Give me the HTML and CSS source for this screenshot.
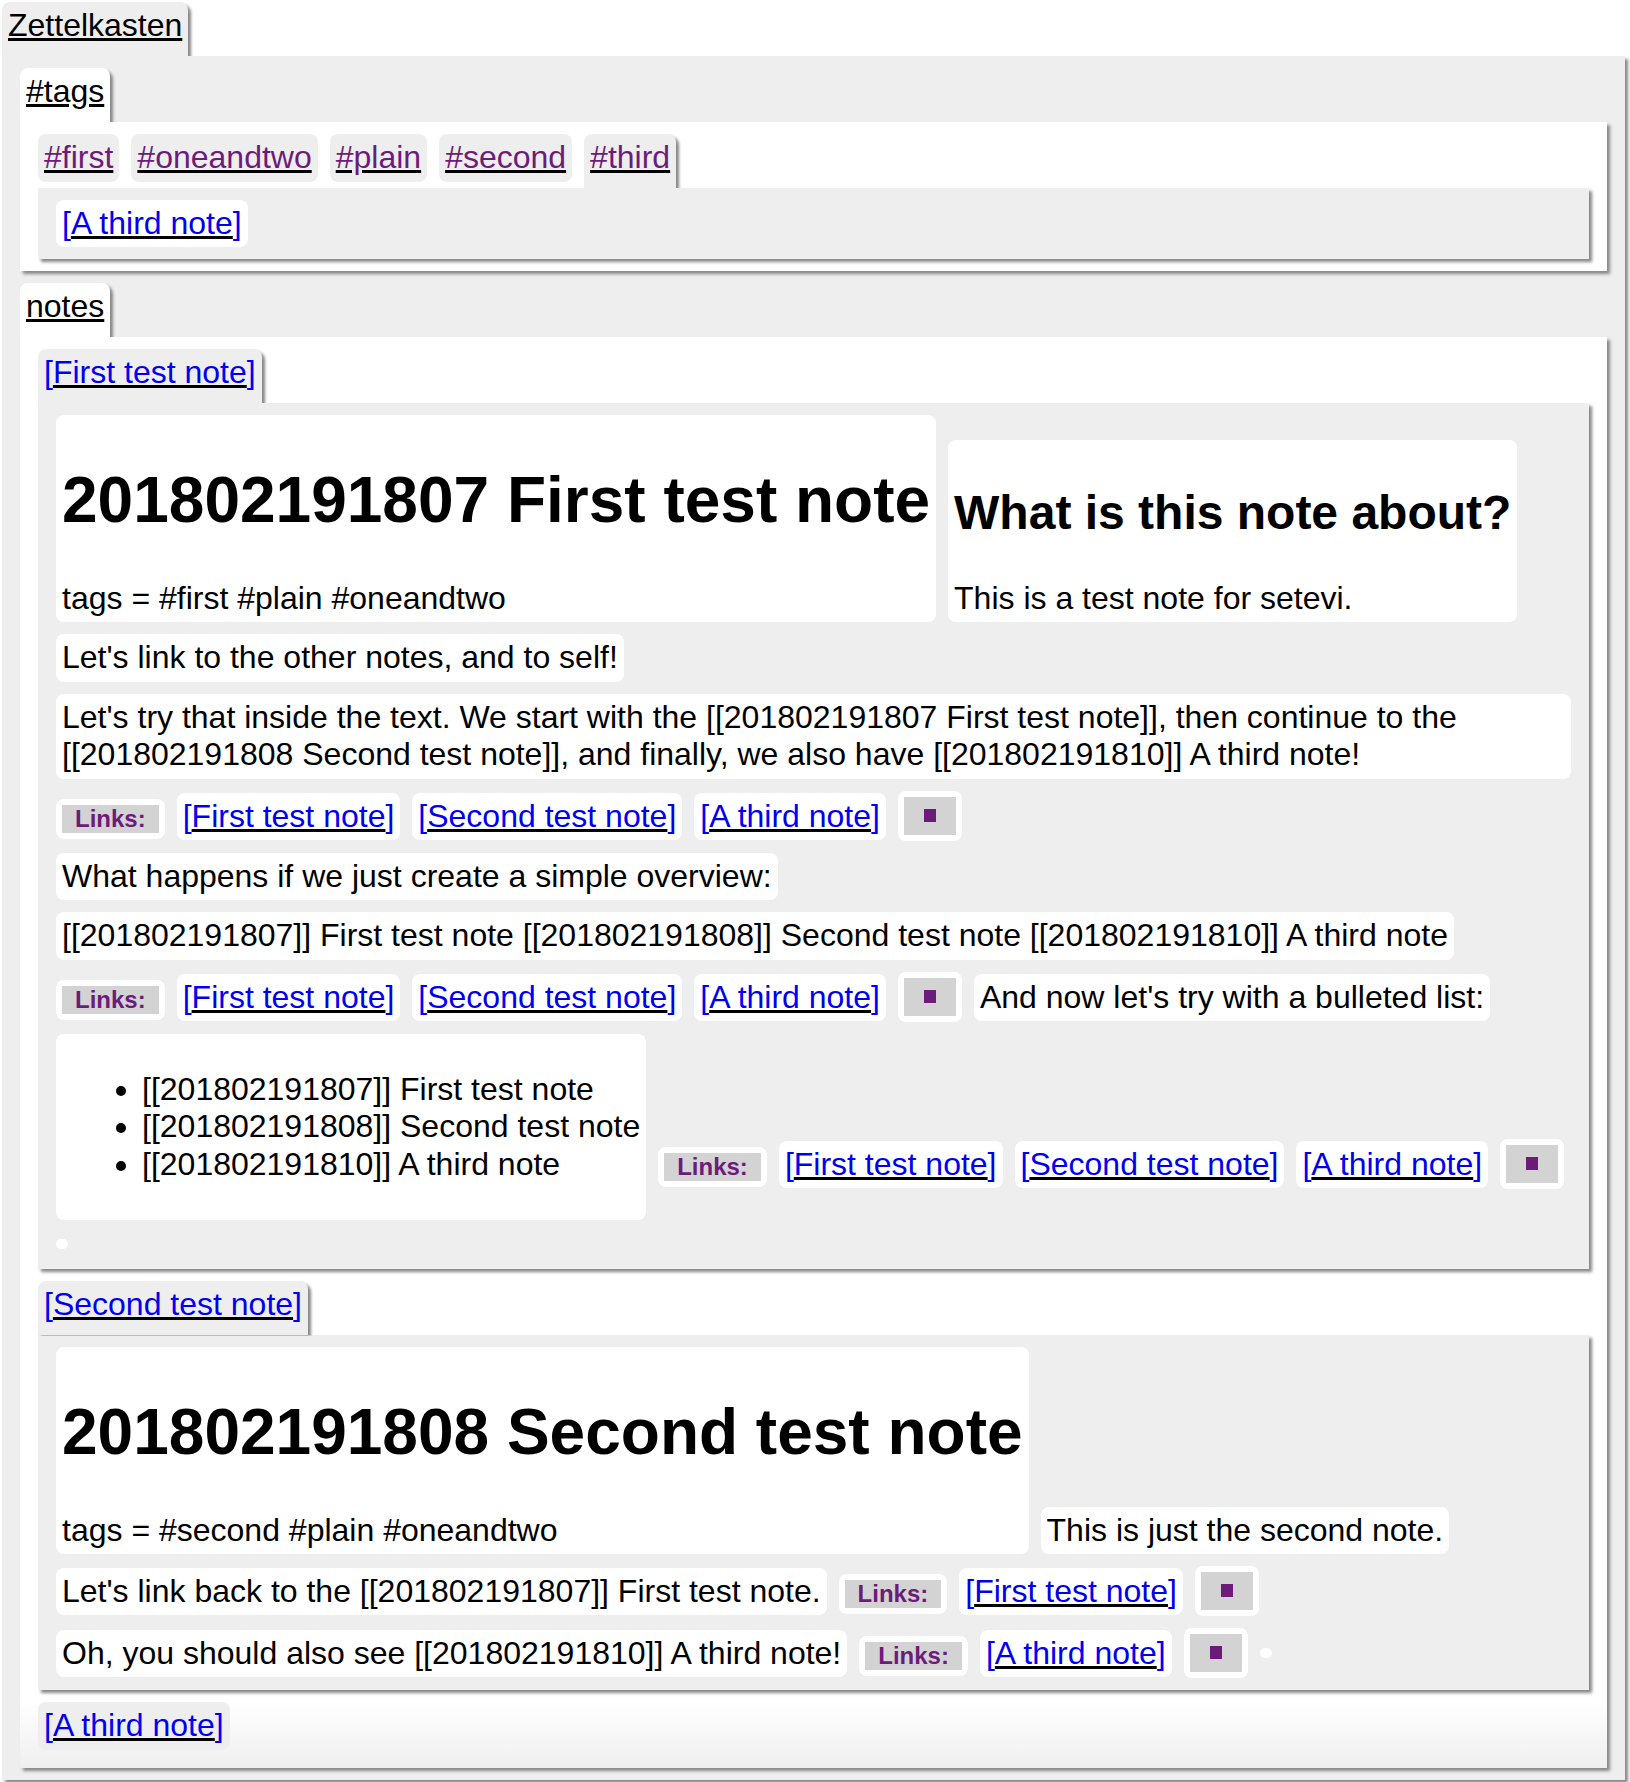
FILE: index.html
```html
<!DOCTYPE html>
<html>
<head>
<meta charset="utf-8">
<title>Zettelkasten</title>
<link rel="stylesheet" href="styles.css">
</head>
<body>
<div class="group root">
  <div class="tabbar"><span class="tab on grey"><a href="#">Zettelkasten</a></span></div>
  <div class="panel grey stack">
    <div class="group">
      <div class="tabbar"><span class="tab on white"><a href="#">#tags</a></span></div>
      <div class="panel white stack">
        <div class="group">
          <div class="tabbar">
            <span class="tab grey tag"><a href="#">#first</a></span>
            <span class="tab grey tag"><a href="#">#oneandtwo</a></span>
            <span class="tab grey tag"><a href="#">#plain</a></span>
            <span class="tab grey tag"><a href="#">#second</a></span>
            <span class="tab on grey tag"><a href="#">#third</a></span>
          </div>
          <div class="panel grey flow"><span class="it ref">[<a href="#">A third note</a>]</span></div>
        </div>
      </div>
    </div>
    <div class="group">
      <div class="tabbar"><span class="tab on white"><a href="#">notes</a></span></div>
      <div class="panel white stack fade">
        <div class="group">
          <div class="tabbar"><span class="tab on grey ref">[<a href="#">First test note</a>]</span></div>
          <div class="panel grey flow notes"><div class="it hd"><h1>201802191807 First test note</h1><p>tags = #first #plain #oneandtwo</p></div><div class="it hd"><h2>What is this note about?</h2><p>This is a test note for setevi.</p></div><p class="it">Let's link to the other notes, and to self!</p><p class="it">Let's try that inside the text. We start with the [[201802191807 First test note]], then continue to the [[201802191808 Second test note]], and finally, we also have [[201802191810]] A third note!</p><span class="it lbl"><b>Links:</b></span><span class="it ref">[<a href="#">First test note</a>]</span><span class="it ref">[<a href="#">Second test note</a>]</span><span class="it ref">[<a href="#">A third note</a>]</span><span class="it sq"><span class="sqb"><i></i></span></span><p class="it">What happens if we just create a simple overview:</p><p class="it">[[201802191807]] First test note [[201802191808]] Second test note [[201802191810]] A third note</p><span class="it lbl"><b>Links:</b></span><span class="it ref">[<a href="#">First test note</a>]</span><span class="it ref">[<a href="#">Second test note</a>]</span><span class="it ref">[<a href="#">A third note</a>]</span><span class="it sq"><span class="sqb"><i></i></span></span><p class="it">And now let's try with a bulleted list:</p><div class="it"><ul><li>[[201802191807]] First test note</li><li>[[201802191808]] Second test note</li><li>[[201802191810]] A third note</li></ul></div><span class="it lbl"><b>Links:</b></span><span class="it ref">[<a href="#">First test note</a>]</span><span class="it ref">[<a href="#">Second test note</a>]</span><span class="it ref">[<a href="#">A third note</a>]</span><span class="it sq"><span class="sqb"><i></i></span></span><span class="it nil"></span></div>
        </div>
        <div class="group">
          <div class="tabbar"><span class="tab on grey ref">[<a href="#">Second test note</a>]</span></div>
          <div class="panel grey flow"><div class="it hd"><h1>201802191808 Second test note</h1><p>tags = #second #plain #oneandtwo</p></div><p class="it">This is just the second note.</p><p class="it">Let's link back to the [[201802191807]] First test note.</p><span class="it lbl"><b>Links:</b></span><span class="it ref">[<a href="#">First test note</a>]</span><span class="it sq"><span class="sqb"><i></i></span></span><p class="it">Oh, you should also see [[201802191810]] A third note!</p><span class="it lbl"><b>Links:</b></span><span class="it ref">[<a href="#">A third note</a>]</span><span class="it sq"><span class="sqb"><i></i></span></span><span class="it nil"></span></div>
        </div>
        <div class="group">
          <div class="tabbar"><span class="tab grey ref">[<a href="#">A third note</a>]</span></div>
        </div>
      </div>
    </div>
  </div>
</div>
</body>
</html>
```

FILE: styles.css
```css
body {
  margin: 0;
  font-family: "Liberation Sans", Arial, Helvetica, sans-serif;
  font-size: 32px;
  color: #000;
  background: #fff;
}

a {
  color: inherit;
  text-decoration: underline;
  text-decoration-color: #000;
}

.group {
  margin: 6px;
}

.root {
  margin: 2px 5px 2px 2px;
}

.tabbar {
  display: flex;
  gap: 12px;
  align-items: flex-start;
}

.tab {
  padding: 5px 6px 6px;
  border-radius: 8px;
  margin-bottom: 6px;
}

.tab.on {
  padding-bottom: 12px;
  margin-bottom: 0;
  border-radius: 8px 8px 0 0;
  box-shadow: 3px 3px 3px #888;
  clip-path: inset(-10px -10px 0 -10px);
}

.grey {
  background: #eee;
}

.white {
  background: #fff;
}

.panel {
  padding: 6px 12px;
  box-shadow: 3px 3px 3px #888;
}

.stack {
  display: flex;
  flex-direction: column;
}

.fade {
  background: linear-gradient(#fff calc(100% - 68px), #efefef);
}

.notes {
  line-height: 1.17;
}

.tag {
  color: #6d1b7b;
}

.ref {
  color: #0000ee;
}

.it {
  display: inline-block;
  vertical-align: baseline;
  margin: 6px;
  padding: 5px 6px;
  background: #fff;
  border-radius: 8px;
}

.hd h1 {
  font-size: 64px;
  font-weight: bold;
  line-height: normal;
  margin: 43px 0;
}

.hd h2 {
  font-size: 48px;
  font-weight: bold;
  line-height: normal;
  margin: 40px 0;
}

.hd p {
  margin: 0;
}

.it ul {
  margin: 32px 0;
  padding-left: 80px;
}

.lbl {
  padding: 6px;
  font-size: 24px;
}

.lbl b {
  display: inline-block;
  padding: 0 13px;
  background: #d3d3d3;
  color: #6d1b7b;
  font-weight: bold;
}

.sq {
  padding: 6px;
  font-size: 24px;
}

.sqb {
  display: inline-block;
  width: 52px;
  height: 38px;
  box-sizing: border-box;
  padding-top: 8px;
  line-height: 27px;
  text-align: center;
  background: #d3d3d3;
}

.sqb i {
  display: inline-block;
  width: 12px;
  height: 13px;
  background: #6d1b7b;
  vertical-align: 5px;
}

.nil {
  padding: 5px 6px;
}
```
